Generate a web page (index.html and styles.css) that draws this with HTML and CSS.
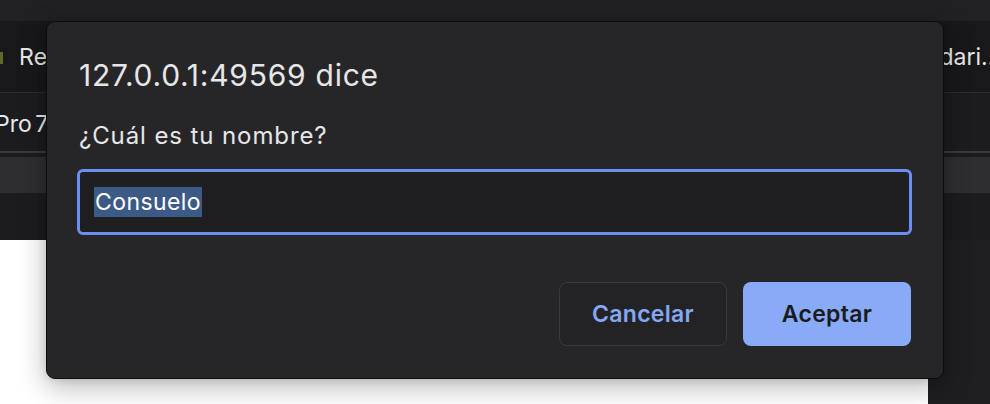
FILE: index.html
```html
<!DOCTYPE html>
<html lang="es">
<head>
<meta charset="utf-8">
<link rel="stylesheet" href="styles.css">
</head>
<body>
<div class="browser">
  <div class="titlebar"></div>
  <div class="bookmarks">
    <span class="fav"></span>
    <span class="bm-left">Re</span>
    <span class="bm-right">dari...</span>
  </div>
  <div class="tabs-row">
    <span class="row-text">Pro 7</span>
  </div>
  <div class="sep"></div>
  <div class="gap-band"></div>
  <div class="gray-band"></div>
  <div class="dark-band"></div>
  <div class="page-area">
    <div class="page"></div>
    <div class="side"></div>
  </div>
</div>

<div class="dialog">
  <div class="dlg-title">127.0.0.1:49569 dice</div>
  <div class="dlg-msg">¿Cuál es tu nombre?</div>
  <div class="dlg-input"><span class="sel">Consuelo</span></div>
  <div class="dlg-actions">
    <button class="btn btn-cancel">Cancelar</button>
    <button class="btn btn-ok">Aceptar</button>
  </div>
</div>
</body>
</html>
```

FILE: styles.css
```css
* { box-sizing: border-box; }
html, body { margin: 0; padding: 0; }
body {
  width: 990px;
  height: 404px;
  overflow: hidden;
  background: #1d1d1f;
  font-family: Inter, "Noto Sans", sans-serif;
  position: relative;
}
.browser { display: flex; flex-direction: column; }
.titlebar { height: 21px; background: #212123; }
.bookmarks {
  height: 72px;
  background: #18181a;
  display: flex;
  align-items: center;
  border-bottom: 1px solid #2c2c2e;
}
.fav {
  width: 3px; height: 12px;
  background: #5a6b2a;
  margin-right: 16px;
  margin-top: 2px;
}
.bm-left { color: #e8e8e8; font-size: 23px; letter-spacing: 0.4px; }
.bm-right { color: #e8e8e8; font-size: 23px; margin-left: auto; margin-right: -11px; white-space: nowrap; }
.tabs-row {
  height: 58px;
  background: #1c1c1e;
  display: flex;
  align-items: center;
}
.row-text {
  color: #e8e8e8;
  font-size: 23px;
  margin-left: -5px;
  margin-top: 4px;
  word-spacing: -3px;
  white-space: nowrap;
}
.sep { height: 2px; background: #3a3a3c; }
.gap-band { height: 4px; background: #1c1c1e; }
.gray-band { height: 36px; background: #2e2e31; }
.dark-band { height: 47px; background: #1c1c1e; }
.page-area { display: flex; height: 164px; }
.page { width: 928px; background: #ffffff; }
.side { flex: 1; background: #1e1e20; }

.dialog {
  position: absolute;
  left: 46px;
  top: 21px;
  width: 898px;
  height: 358px;
  background: #262628;
  border: 1px solid #0c0c0d;
  border-radius: 9px;
  box-shadow: 0 8px 28px rgba(0,0,0,0.28), 0 0 10px rgba(0,0,0,0.12);
  padding: 0 31px 0 30px;
  display: flex;
  flex-direction: column;
}
.dlg-title {
  color: #e6e6e8;
  font-size: 30px;
  line-height: 36px;
  letter-spacing: 0.75px;
  margin-top: 35px;
  margin-left: 2px;
}
.dlg-msg {
  color: #e6e6e8;
  font-size: 24px;
  line-height: 30px;
  letter-spacing: 0.9px;
  margin-top: 28px;
  margin-left: 2px;
}
.dlg-input {
  margin-top: 18px;
  height: 66px;
  border: 3px solid #6a8ef2;
  border-radius: 6px;
  background: #1f1f21;
  display: flex;
  align-items: center;
  padding-left: 14px;
}
.sel {
  background: #3d5a87;
  color: #ffffff;
  font-size: 23px;
  line-height: 30px;
  letter-spacing: 0.4px;
  padding: 0 1px;
}
.dlg-actions {
  display: flex;
  justify-content: flex-end;
  gap: 16px;
  margin-top: 47px;
  margin-right: 1px;
}
.btn {
  width: 168px;
  height: 64px;
  border-radius: 8px;
  font-family: Inter, "Noto Sans", sans-serif;
  font-size: 23px;
  font-weight: 600;
  letter-spacing: 0.3px;
  cursor: default;
}
.btn-cancel {
  background: #232325;
  border: 1px solid #3a3a3c;
  color: #84a8f4;
}
.btn-ok {
  background: #88aaf7;
  border: none;
  color: #1b1b1d;
}
```
